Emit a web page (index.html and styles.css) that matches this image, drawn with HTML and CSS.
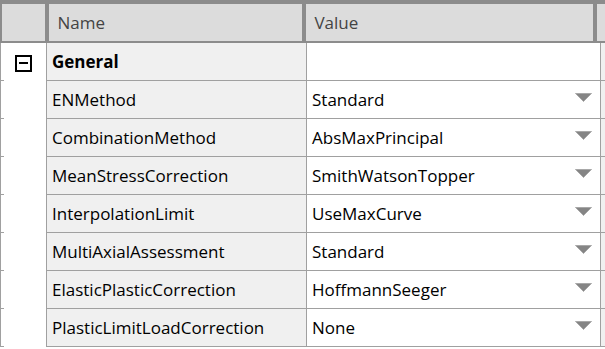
FILE: index.html
```html
<!DOCTYPE html>
<html lang="en">
<head>
    <meta charset="UTF-8">
    <title>Property Grid</title>
    <link rel="stylesheet" href="styles.css">
</head>
<body>
    <div class="grid">
        <div class="head">
            <div class="h-gutter"></div>
            <div class="h-cell h-name">Name</div>
            <div class="h-cell h-value">Value</div>
            <div class="h-cell h-rest"></div>
        </div>

        <div class="row">
            <div class="gutter"><span class="toggle"></span></div>
            <div class="cell name group">General</div>
            <div class="cell value"></div>
            <div class="cell rest"></div>
        </div>
        <div class="row">
            <div class="gutter"></div>
            <div class="cell name">ENMethod</div>
            <div class="cell value">Standard<svg class="arrow" width="17" height="9" viewBox="0 0 17 9"><polygon points="0.5,0.5 16.5,0.5 8.5,8.5" /></svg></div>
            <div class="cell rest"></div>
        </div>
        <div class="row">
            <div class="gutter"></div>
            <div class="cell name">CombinationMethod</div>
            <div class="cell value">AbsMaxPrincipal<svg class="arrow" width="17" height="9" viewBox="0 0 17 9"><polygon points="0.5,0.5 16.5,0.5 8.5,8.5" /></svg></div>
            <div class="cell rest"></div>
        </div>
        <div class="row">
            <div class="gutter"></div>
            <div class="cell name">MeanStressCorrection</div>
            <div class="cell value">SmithWatsonTopper<svg class="arrow" width="17" height="9" viewBox="0 0 17 9"><polygon points="0.5,0.5 16.5,0.5 8.5,8.5" /></svg></div>
            <div class="cell rest"></div>
        </div>
        <div class="row">
            <div class="gutter"></div>
            <div class="cell name">InterpolationLimit</div>
            <div class="cell value">UseMaxCurve<svg class="arrow" width="17" height="9" viewBox="0 0 17 9"><polygon points="0.5,0.5 16.5,0.5 8.5,8.5" /></svg></div>
            <div class="cell rest"></div>
        </div>
        <div class="row">
            <div class="gutter"></div>
            <div class="cell name">MultiAxialAssessment</div>
            <div class="cell value">Standard<svg class="arrow" width="17" height="9" viewBox="0 0 17 9"><polygon points="0.5,0.5 16.5,0.5 8.5,8.5" /></svg></div>
            <div class="cell rest"></div>
        </div>
        <div class="row">
            <div class="gutter"></div>
            <div class="cell name">ElasticPlasticCorrection</div>
            <div class="cell value">HoffmannSeeger<svg class="arrow" width="17" height="9" viewBox="0 0 17 9"><polygon points="0.5,0.5 16.5,0.5 8.5,8.5" /></svg></div>
            <div class="cell rest"></div>
        </div>
        <div class="row">
            <div class="gutter"></div>
            <div class="cell name">PlasticLimitLoadCorrection</div>
            <div class="cell value">None<svg class="arrow" width="17" height="9" viewBox="0 0 17 9"><polygon points="0.5,0.5 16.5,0.5 8.5,8.5" /></svg></div>
            <div class="cell rest"></div>
        </div>
    </div>
</body>
</html>
```

FILE: styles.css
```css
body {
    margin: 0;
    background: #fff;
    font-family: "Open Sans", "Noto Sans", sans-serif;
    font-size: 17px;
    color: #000;
    overflow: hidden;
}
.grid {
    width: 605px;
    height: 349px;
    overflow: hidden;
}
.head {
    display: flex;
    height: 43px;
    box-sizing: border-box;
    border-top: 4px solid #8c8c8c;
    border-bottom: 2px solid #8c8c8c;
    background: #dcdcdc;
}
.h-gutter {
    width: 46px;
    box-sizing: border-box;
    border-left: 2px solid #8c8c8c;
}
.h-cell {
    box-sizing: border-box;
    border-left: 4px solid #8c8c8c;
    display: flex;
    align-items: center;
    padding-left: 8px;
    color: #444;
}
.h-name {
    width: 260px;
}
.h-value {
    width: 294px;
}
.h-rest {
    flex: 1;
}
.row {
    display: flex;
    height: 38px;
}
.gutter {
    width: 46px;
    box-sizing: border-box;
    border-left: 1px solid #a0a0a0;
    background: #fff linear-gradient(#a0a0a0, #a0a0a0) no-repeat left bottom / 3px 1px;
    display: flex;
    align-items: center;
    padding-left: 14px;
}
.toggle {
    width: 17px;
    height: 17px;
    box-sizing: border-box;
    border: 2px solid #000;
    margin-top: 2px;
    display: flex;
    align-items: center;
    justify-content: center;
}
.toggle::before {
    content: "";
    width: 9px;
    height: 2px;
    background: #000;
}
.cell {
    box-sizing: border-box;
    border-left: 1px solid #a0a0a0;
    border-bottom: 1px solid #a0a0a0;
    display: flex;
    align-items: center;
    white-space: nowrap;
}
.name {
    width: 260px;
    background: #f0f0f0;
    padding-left: 5px;
}
.group {
    font-weight: bold;
}
.value {
    width: 294px;
    background: #fff;
    padding-left: 5px;
    padding-right: 8px;
    justify-content: space-between;
}
.rest {
    flex: 1;
    background: #f0f0f0;
}
.arrow {
    margin-top: -5px;
}
.arrow polygon {
    fill: #858585;
    stroke: #a8a8a8;
    stroke-width: 1;
}
```
